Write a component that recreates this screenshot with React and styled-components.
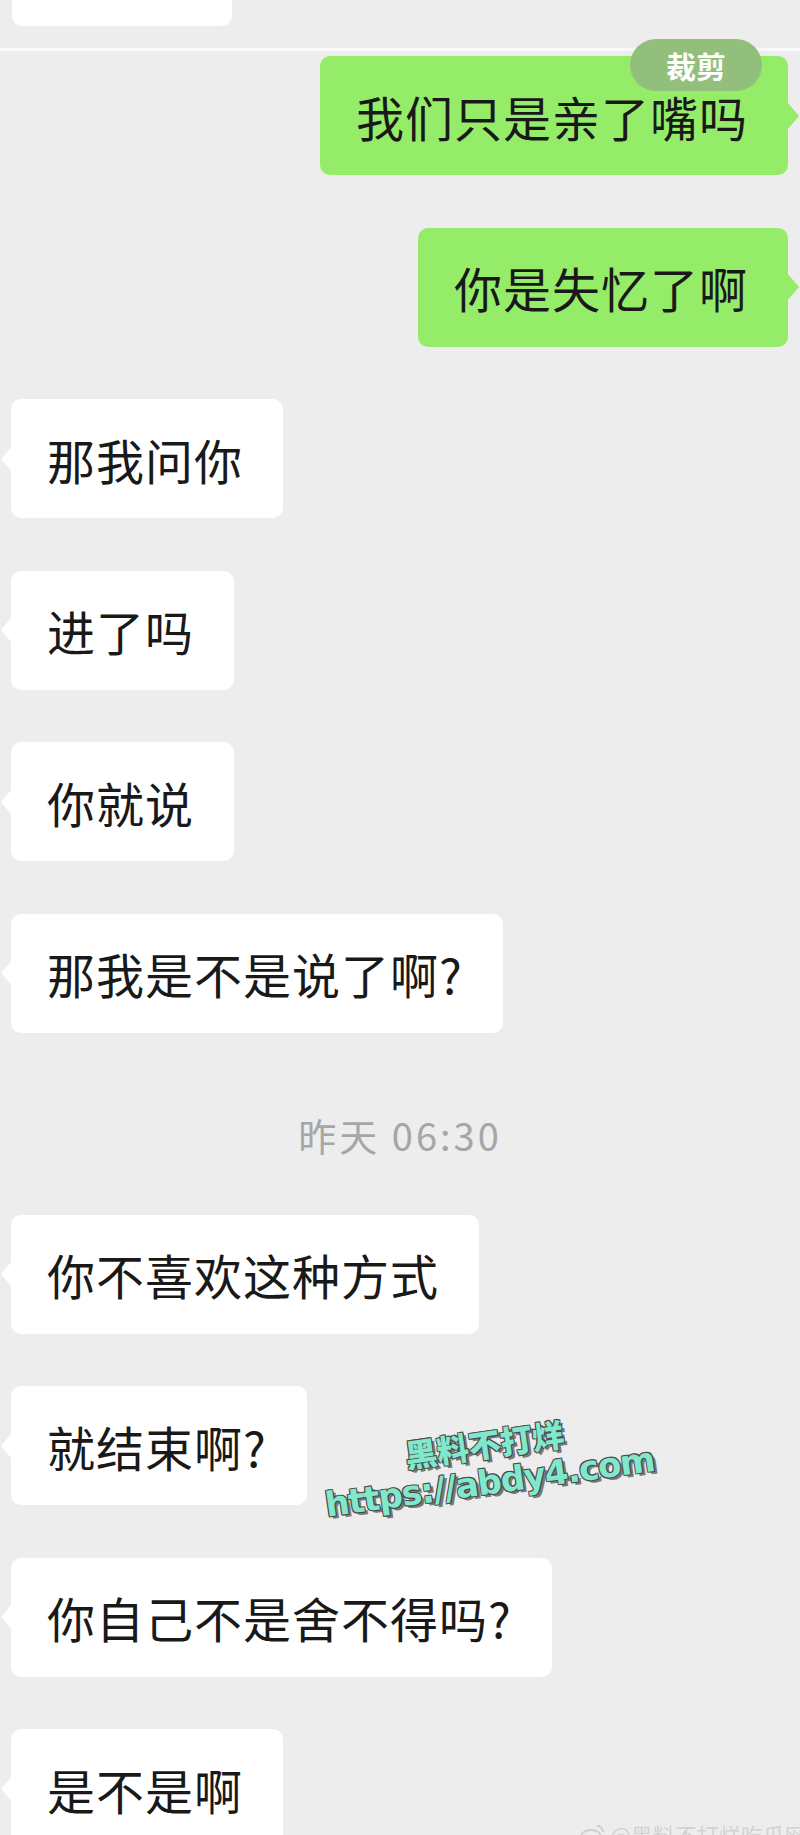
import React from 'react'
import styled, { createGlobalStyle } from 'styled-components'

const GlobalStyle = createGlobalStyle`
  html, body {
    margin: 0;
    padding: 0;
    background: #ededed;
  }
`

const messages = [
  { mine: true, text: '我们只是亲了嘴吗', badge: '裁剪' },
  { mine: true, text: '你是失忆了啊' },
  { text: '那我问你' },
  { text: '进了吗' },
  { text: '你就说' },
  { text: '那我是不是说了啊?' },
  { time: '昨天 06:30' },
  { text: '你不喜欢这种方式' },
  { text: '就结束啊?' },
  { text: '你自己不是舍不得吗?' },
  { text: '是不是啊' },
]

function App() {
  return (
    <Screen>
      <GlobalStyle />
      <Stub />
      <Divider />
      <Chat>
        {messages.map((m, i) =>
          m.time ? (
            <Time key={i}>{m.time}</Time>
          ) : (
            <Bubble key={i} $mine={m.mine}>
              {m.text}
              {m.badge && <Badge>{m.badge}</Badge>}
            </Bubble>
          )
        )}
      </Chat>
      <Stamp>
        <div>黑料不打烊</div>
        <Url>https://abdy4.com</Url>
      </Stamp>
      <Weibo>
        <svg width="26" height="22" viewBox="0 0 26 22">
          <ellipse cx="11" cy="14" rx="10" ry="7" fill="none" stroke="#cfcfcf" strokeWidth="2" />
          <path d="M17 3 a6 6 0 0 1 6 6" fill="none" stroke="#cfcfcf" strokeWidth="2" />
        </svg>
        @黑料不打烊吃瓜网
      </Weibo>
    </Screen>
  )
}

export default App

//#region styles
const Screen = styled.div`
  position: relative;
  display: flex;
  flex-direction: column;
  width: 800px;
  height: 1835px;
  overflow: hidden;
  background: #ededed;
  font-family: "Noto Sans CJK SC", "Noto Sans", sans-serif;
`
const Stub = styled.div`
  flex: none;
  width: 220px;
  height: 26px;
  margin-left: 12px;
  background: #fff;
  border-radius: 0 0 10px 10px;
`
const Divider = styled.div`
  flex: none;
  margin-top: 22px;
  height: 3px;
  background: #f9f9f9;
`
const Chat = styled.div`
  display: flex;
  flex-direction: column;
  gap: 52.5px;
  padding-top: 5px;
`
const Bubble = styled.div`
  position: relative;
  align-self: ${p => (p.$mine ? 'flex-end' : 'flex-start')};
  margin: ${p => (p.$mine ? '0 12px 0 0' : '0 0 0 11px')};
  padding: 29.5px 40px 29.5px 36px;
  background: ${p => (p.$mine ? '#95ec69' : '#fff')};
  border-radius: 10px;
  color: #191919;
  font-size: 48px;
  line-height: 60px;
  letter-spacing: 1px;
  white-space: nowrap;
  &::after {
    content: '';
    position: absolute;
    top: 50%;
    margin-top: -14px;
    border: 12px solid transparent;
    border-top-width: 14px;
    border-bottom-width: 14px;
    ${p =>
      p.$mine
        ? 'right: -23px; border-left-color: #95ec69;'
        : 'left: -22px; border-right-color: #fff;'}
  }
`
const Badge = styled.div`
  position: absolute;
  top: -17px;
  right: 26px;
  width: 132px;
  height: 52px;
  display: flex;
  align-items: center;
  justify-content: center;
  border-radius: 26px;
  background: #92c07c;
  color: #fff;
  font-size: 30px;
  font-weight: 700;
  line-height: 1;
  letter-spacing: 0;
`
const Time = styled.div`
  height: 77px;
  padding-top: 22px;
  box-sizing: border-box;
  text-align: center;
  color: #a6a6a6;
  font-size: 38px;
  line-height: 55px;
  letter-spacing: 3px;
`
const Stamp = styled.div`
  position: absolute;
  left: 312px;
  top: 1424px;
  width: 350px;
  transform: rotate(-8deg);
  text-align: center;
  color: #80e8cc;
  font-family: "Noto Sans CJK SC", sans-serif;
  font-size: 32px;
  font-weight: 900;
  line-height: 38px;
  text-shadow: 1px 1px 0 #4a4a4a, -1px -1px 0 #4a4a4a, 1px -1px 0 #4a4a4a,
    -1px 1px 0 #4a4a4a, 3px 3px 0 #7a7a7a;
`
const Url = styled.div`
  font-family: "DejaVu Sans", "Liberation Sans", sans-serif;
  font-size: 34px;
  font-weight: 700;
  letter-spacing: -1px;
  line-height: 40px;
`
const Weibo = styled.div`
  position: absolute;
  left: 580px;
  top: 1818px;
  display: flex;
  align-items: center;
  gap: 4px;
  color: #d2d2d2;
  font-size: 22px;
  white-space: nowrap;
`
//#endregion
